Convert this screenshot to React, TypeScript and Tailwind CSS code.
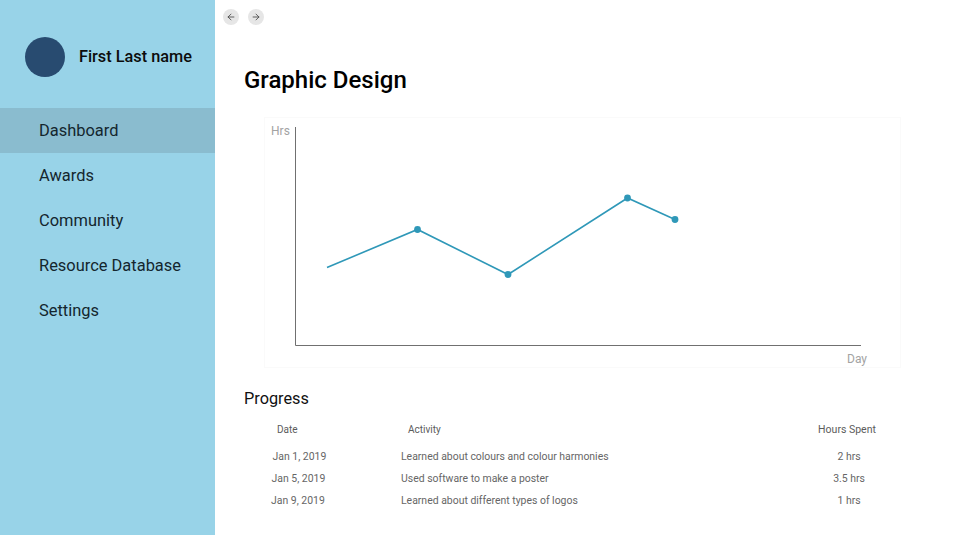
import { ArrowLeft, ArrowRight } from "lucide-react";

const navItems = ["Dashboard", "Awards", "Community", "Resource Database", "Settings"];

const rows = [
  { date: "Jan 1, 2019", dateClass: "pl-[28.5px]", activity: "Learned about colours and colour harmonies", hours: "2 hrs" },
  { date: "Jan 5, 2019", dateClass: "pl-[27.5px]", activity: "Used software to make a poster", hours: "3.5 hrs" },
  { date: "Jan 9, 2019", dateClass: "pl-[27px]", activity: "Learned about different types of logos", hours: "1 hrs" },
];

function Chart() {
  return (
    <div className="relative ml-5 mt-[23px] h-[251px] w-[637px] border border-[#fafafa]">
      <span className="absolute left-[6px] top-[6px] text-[12px] leading-[14px] text-[#a3a3a3]">Hrs</span>
      <span className="absolute left-[582px] top-[234px] text-[12px] leading-[14px] text-[#a3a3a3]">Day</span>
      <svg width="635" height="249" viewBox="265 118 635 249" className="block">
        <path d="M295.5 127V345.5H861" fill="none" stroke="#707070" strokeWidth="1" />
        <polyline
          points="327,267.5 417.5,229.5 508,274.5 627.5,198 675,219.5"
          fill="none"
          stroke="#2f98b8"
          strokeWidth="1.6"
        />
        <circle cx="417.5" cy="229.5" r="3.4" fill="#2f98b8" />
        <circle cx="508" cy="274.5" r="3.4" fill="#2f98b8" />
        <circle cx="627.5" cy="198" r="3.4" fill="#2f98b8" />
        <circle cx="675" cy="219.5" r="3.4" fill="#2f98b8" />
      </svg>
    </div>
  );
}

export default function App() {
  return (
    <div className="flex h-[535px] w-[954px] overflow-hidden bg-white font-['Roboto',sans-serif]">
      {/* Sidebar */}
      <aside className="w-[215px] shrink-0 bg-[#98d3e8]">
        <div className="flex items-center gap-[14px] pl-[25px] pt-[37px]">
          <div className="h-10 w-10 rounded-full bg-[#284b70]" />
          <span className="text-[16.3px] font-medium leading-5 text-[#0c0c0c]">First Last name</span>
        </div>
        <nav className="mt-[31px]">
          {navItems.map((item, i) => (
            <div
              key={item}
              className={`flex h-[45px] items-center pl-[39px] pt-[2px] text-[16.45px] text-[#14262e] ${i === 0 ? "bg-[#8abccf]" : ""}`}
            >
              {item}
            </div>
          ))}
        </nav>
      </aside>

      {/* Main */}
      <main className="flex-1">
        <div className="flex gap-[9px] pl-2 pt-[9px]">
          <button className="flex h-4 w-4 items-center justify-center rounded-full bg-[#e6e6e6] text-[#444]">
            <ArrowLeft size={10} strokeWidth={2} />
          </button>
          <button className="flex h-4 w-4 items-center justify-center rounded-full bg-[#e6e6e6] text-[#444]">
            <ArrowRight size={10} strokeWidth={2} />
          </button>
        </div>

        <div className="pl-[29px]">
          <h1 className="mt-[41px] text-[24px] font-medium leading-7 text-black">Graphic Design</h1>
          <Chart />
          <h2 className="mt-[21px] text-[16.3px] leading-5 text-[#111]">Progress</h2>

          <div className="mt-[15px] grid grid-cols-[157px_383px_126px] text-[10px] leading-3 text-[#5c5c5c]">
            <div className="pl-[33px]">Date</div>
            <div className="pl-[7px]">Activity</div>
            <div className="text-center text-[10.5px]">Hours Spent</div>
          </div>

          <div className="mt-[15px] flex flex-col gap-[10px]">
            {rows.map((row) => (
              <div key={row.date} className="grid grid-cols-[157px_383px_126px] text-[10.45px] leading-3 text-[#666]">
                <div className={row.dateClass}>{row.date}</div>
                <div>{row.activity}</div>
                <div className="pl-[4px] text-center">{row.hours}</div>
              </div>
            ))}
          </div>
        </div>
      </main>
    </div>
  );
}
